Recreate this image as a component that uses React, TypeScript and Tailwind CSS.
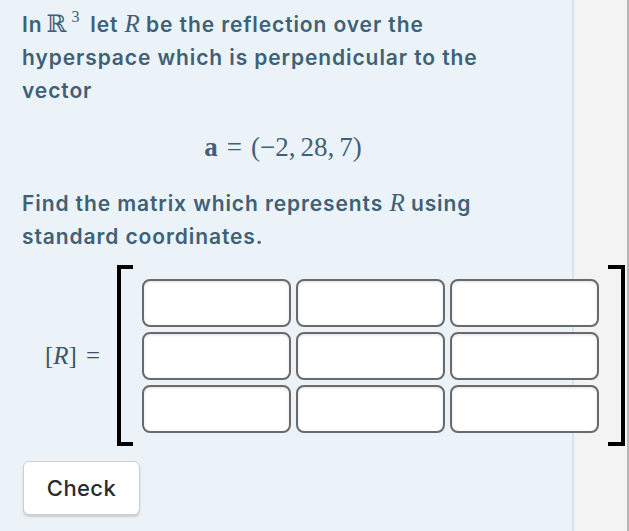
import React from 'react'

const cells = Array.from({ length: 9 }, (_, i) => i)

export default function App() {
  return (
    <div className="flex h-[531px] w-[629px] overflow-hidden bg-[#f3f3f3]">
      <div className="relative h-full w-[574px] shrink-0 border-r-2 border-[#d3e6ee] bg-[#ecf3f8]">
        <div className="pl-[22px] pr-[20px] pt-[8px] font-['Inter',sans-serif] text-[21px] font-semibold leading-[33px] tracking-[0.9px] text-[#3e6176]">
          <p className="whitespace-nowrap">
            In
            <span className="ml-[4px] inline-block font-['DejaVu_Serif',serif] text-[24px] leading-none font-normal tracking-normal">ℝ</span>
            <span className="relative -top-[10px] ml-[5px] mr-[10px] inline-block font-['Liberation_Serif',serif] text-[16px] leading-none font-normal">3</span>
            let <span className="inline-block font-['Liberation_Serif',serif] text-[25px] leading-none font-normal italic tracking-normal">R</span> be the reflection over the
            <br />
            hyperspace which is perpendicular to the
            <br />
            vector
          </p>

          <div className="flex h-[80px] items-center justify-center pr-[8px] font-['Liberation_Serif',serif] text-[27px] leading-none font-normal tracking-normal">
            <span className="whitespace-nowrap">
              <span className="font-bold">a</span>
              <span className="mx-[9px]">=</span>(−2,<span className="ml-[5px]">28,</span>
              <span className="ml-[5px]">7)</span>
            </span>
          </div>

          <p className="whitespace-nowrap">
            Find the matrix which represents{' '}
            <span className="inline-block font-['Liberation_Serif',serif] text-[25px] leading-none font-normal italic tracking-normal">R</span> using
            <br />
            standard coordinates.
          </p>
        </div>

        <div className="mt-[12px] flex items-center pl-[45px]">
          <div className="w-[72px] shrink-0 whitespace-nowrap font-['Liberation_Serif',serif] text-[25px] text-[#3e5566]">
            [<span className="italic">R</span>]<span className="ml-[9px]">=</span>
          </div>
          <div className="h-[181px] w-[16px] shrink-0 border-y-4 border-l-4 border-black" />
          <div className="ml-[9px] grid shrink-0 grid-cols-[149px_149px_149px] gap-[5px]">
            {cells.map(i => (
              <div
                key={i}
                className="h-[48px] rounded-[8px] border-2 border-[#6a6a6a] bg-white shadow-[inset_0_1px_3px_rgba(0,0,0,0.12)]"
              />
            ))}
          </div>
          <div className="ml-[9px] h-[181px] w-[17px] shrink-0 border-y-4 border-r-4 border-black" />
        </div>

        <div className="mt-[15px] pl-[23px]">
          <button className="h-[54px] w-[117px] rounded-[6px] border border-[#cfcfcf] bg-white font-['Inter',sans-serif] text-[22px] font-medium tracking-[0.4px] text-[#2b2b2b] shadow-[0_2px_2px_rgba(0,0,0,0.15)]">
            Check
          </button>
        </div>
      </div>
      <div className="flex-1" />
      <div className="h-full w-[2px] bg-[#b5b5b5]" />
    </div>
  )
}
